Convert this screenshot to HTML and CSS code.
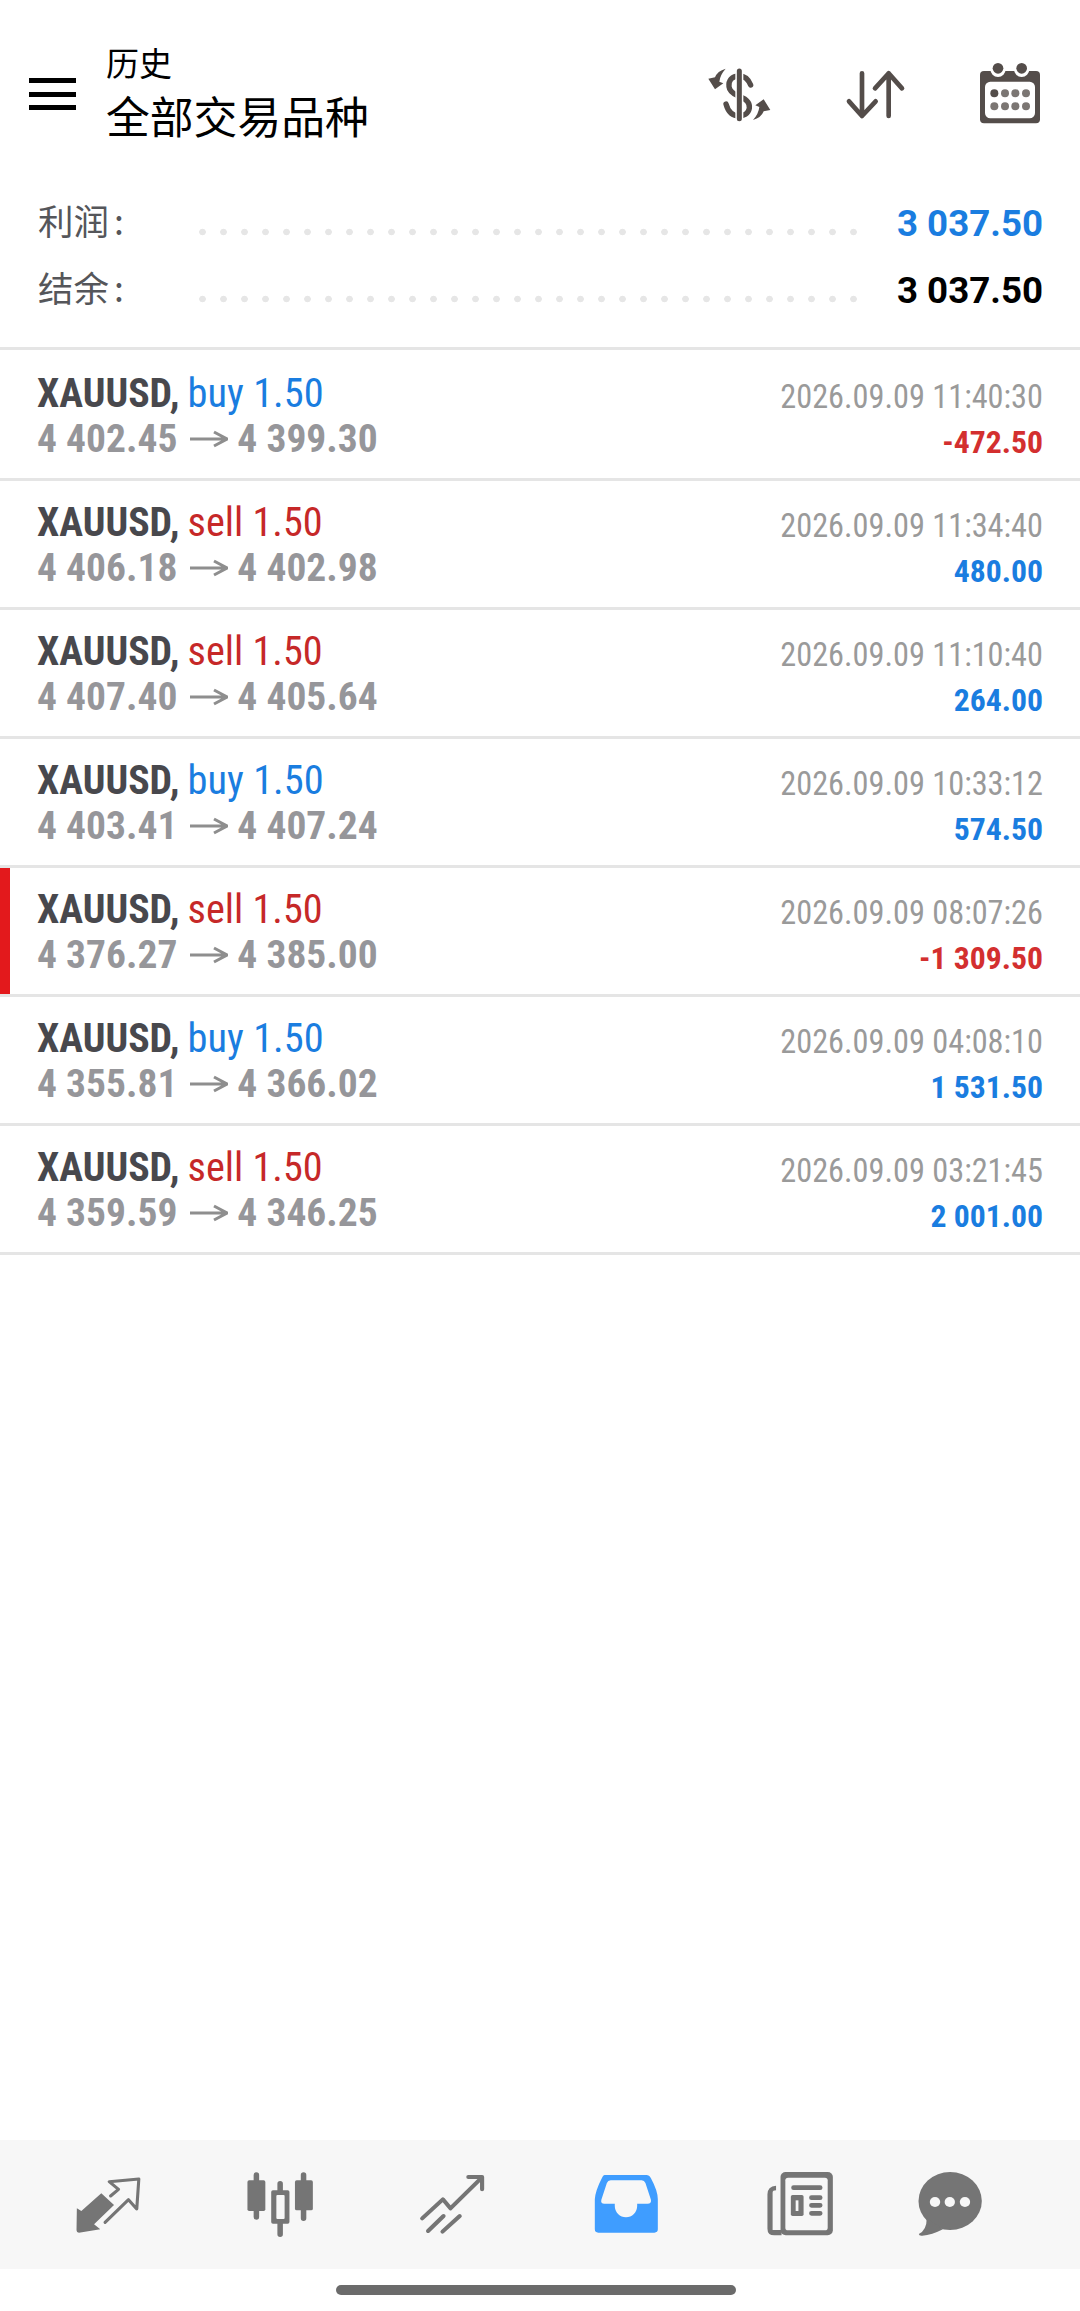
FILE: index.html
```html
<!DOCTYPE html>
<html lang="zh">
<head>
<meta charset="utf-8">
<title>历史</title>
<link rel="stylesheet" href="styles.css">
</head>
<body>
<div class="app">
  <header class="topbar">
    <div class="burger"><span></span><span></span><span></span></div>
    <div class="titles">
      <div class="title-small">历史</div>
      <div class="title-big">全部交易品种</div>
    </div>
    <div class="actions">
      <svg class="act" viewBox="141 60 198 198">
        <path class="dark-stroke s16" d="M272 135C262 110 245 108 238 108C215 108 205 122 207 140C209 160 230 165 240 170C262 178 270 190 268 205C265 222 250 228 238 228C220 228 205 218 198 192"/>
        <path class="cut" d="M238 88V240"/>
        <path class="dark-stroke s15" d="M238 93V236"/>
        <path class="dark" d="M197 86Q172 93 165 112L145 116L165 148L190 130L178 125Q180 105 197 86Z"/>
        <path class="dark" transform="rotate(180 238 163)" d="M197 86Q172 93 165 112L145 116L165 148L190 130L178 125Q180 105 197 86Z"/>
      </svg>
      <svg class="act" viewBox="546 60 198 198">
        <path class="dark-stroke s14" d="M606 100V228M567 184L606 228L647 184M686 228V100M645 145L686 100L726 145"/>
      </svg>
      <svg class="act" viewBox="951 60 198 198">
        <path class="dark" d="M972 93H1128Q1140 93 1140 105V238Q1140 250 1128 250H972Q960 250 960 238V105Q960 93 972 93Z"/>
        <rect class="white" x="975" y="125" width="150" height="110" rx="16"/>
        <circle class="white" cx="1014" cy="88" r="23"/>
        <circle class="white" cx="1085" cy="88" r="23"/>
        <circle class="dark" cx="1014" cy="85" r="16"/>
        <circle class="dark" cx="1085" cy="85" r="16"/>
        <circle class="dark" cx="1003" cy="160" r="12"/>
        <g class="mid">
          <circle cx="1035" cy="160" r="12"/><circle cx="1066" cy="160" r="12"/><circle cx="1098" cy="160" r="12"/>
          <circle cx="1003" cy="199" r="12"/><circle cx="1035" cy="199" r="12"/><circle cx="1066" cy="199" r="12"/><circle cx="1098" cy="199" r="12"/>
        </g>
      </svg>
    </div>
  </header>

  <section class="summary">
    <div class="sum-row"><span class="sum-label">利润 :</span><span class="dots"></span><span class="sum-val blue">3 037.50</span></div>
    <div class="sum-row"><span class="sum-label">结余 :</span><span class="dots"></span><span class="sum-val black">3 037.50</span></div>
  </section>

  <main class="list">
    <div class="row first">
      <div class="left"><div class="l1"><b>XAUUSD,</b> <span class="buy">buy 1.50</span></div><div class="l2">4 402.45<svg class="arrow" viewBox="0 0 38 20"><path d="M0 10H37M24 3L37 10L24 17"/></svg>4 399.30</div></div>
      <div class="right"><div class="time">2026.09.09 11:40:30</div><div class="pnl neg">-472.50</div></div>
    </div>
    <div class="row">
      <div class="left"><div class="l1"><b>XAUUSD,</b> <span class="sell">sell 1.50</span></div><div class="l2">4 406.18<svg class="arrow" viewBox="0 0 38 20"><path d="M0 10H37M24 3L37 10L24 17"/></svg>4 402.98</div></div>
      <div class="right"><div class="time">2026.09.09 11:34:40</div><div class="pnl pos">480.00</div></div>
    </div>
    <div class="row">
      <div class="left"><div class="l1"><b>XAUUSD,</b> <span class="sell">sell 1.50</span></div><div class="l2">4 407.40<svg class="arrow" viewBox="0 0 38 20"><path d="M0 10H37M24 3L37 10L24 17"/></svg>4 405.64</div></div>
      <div class="right"><div class="time">2026.09.09 11:10:40</div><div class="pnl pos">264.00</div></div>
    </div>
    <div class="row">
      <div class="left"><div class="l1"><b>XAUUSD,</b> <span class="buy">buy 1.50</span></div><div class="l2">4 403.41<svg class="arrow" viewBox="0 0 38 20"><path d="M0 10H37M24 3L37 10L24 17"/></svg>4 407.24</div></div>
      <div class="right"><div class="time">2026.09.09 10:33:12</div><div class="pnl pos">574.50</div></div>
    </div>
    <div class="row flagged">
      <div class="left"><div class="l1"><b>XAUUSD,</b> <span class="sell">sell 1.50</span></div><div class="l2">4 376.27<svg class="arrow" viewBox="0 0 38 20"><path d="M0 10H37M24 3L37 10L24 17"/></svg>4 385.00</div></div>
      <div class="right"><div class="time">2026.09.09 08:07:26</div><div class="pnl neg">-1 309.50</div></div>
    </div>
    <div class="row">
      <div class="left"><div class="l1"><b>XAUUSD,</b> <span class="buy">buy 1.50</span></div><div class="l2">4 355.81<svg class="arrow" viewBox="0 0 38 20"><path d="M0 10H37M24 3L37 10L24 17"/></svg>4 366.02</div></div>
      <div class="right"><div class="time">2026.09.09 04:08:10</div><div class="pnl pos">1 531.50</div></div>
    </div>
    <div class="row">
      <div class="left"><div class="l1"><b>XAUUSD,</b> <span class="sell">sell 1.50</span></div><div class="l2">4 359.59<svg class="arrow" viewBox="0 0 38 20"><path d="M0 10H37M24 3L37 10L24 17"/></svg>4 346.25</div></div>
      <div class="right"><div class="time">2026.09.09 03:21:45</div><div class="pnl pos">2 001.00</div></div>
    </div>
  </main>

  <nav class="tabbar">
    <svg class="tab" viewBox="205 117 210 210" preserveAspectRatio="none">
      <path class="grey" d="M222 232L235 240L293 187L330 222L272 280L290 295L228 305Q221 305 221 298Z"/>
      <path class="grey-stroke s9" d="M320 195L343 175L316 152L402 144L396 234L372 206L304 274"/>
    </svg>
    <svg class="tab" viewBox="708 117 210 210" preserveAspectRatio="none">
      <path class="grey-stroke s16" d="M744 132V258M813 158V310M881 132V262"/>
      <rect class="grey" x="718" y="148" width="52" height="92" rx="5"/>
      <rect class="grey" x="856" y="148" width="52" height="90" rx="5"/>
      <rect class="grey" x="787" y="178" width="53" height="100" rx="5"/>
      <rect class="bar-fill" x="802" y="192" width="24" height="72" rx="3"/>
    </svg>
    <svg class="tab" viewBox="1210 117 210 210" preserveAspectRatio="none">
      <path class="grey-stroke s12" d="M1228 262L1288 205L1310 232L1398 143M1362 138H1402V175M1245 300L1290 255M1287 302L1337 255"/>
    </svg>
    <svg class="tab" viewBox="148 117 210 210" preserveAspectRatio="none">
      <path class="blue-fill" d="M190 132H312Q320 132 325 142Q345 180 345 205V295Q345 305 335 305H172Q162 305 162 295V205Q163 180 183 140Q186 132 190 132Z"/>
      <path class="bar-fill" d="M208 148H298Q306 148 309 156L325 206Q327 218 315 218H285V225A32 33 0 0 1 220 225V218H190Q178 218 181 206L197 156Q200 148 208 148Z"/>
    </svg>
    <svg class="tab" viewBox="655 117 210 210" preserveAspectRatio="none">
      <rect class="grey" x="703" y="123" width="152" height="190" rx="15"/>
      <rect class="bar-fill" x="717" y="140" width="123" height="158" rx="8"/>
      <path class="grey" d="M690 164Q665 166 665 190V293Q665 313 685 313H706V297H680V185Q680 178 690 178Z"/>
      <path class="grey-stroke s14" d="M741 170H818M793 200H818M793 223H818M793 247H818"/>
      <rect class="grey" x="733" y="192" width="37" height="63" rx="5"/>
      <rect class="bar-fill" x="747" y="208" width="8" height="32"/>
    </svg>
    <svg class="tab" viewBox="1088 117 210 210" preserveAspectRatio="none">
      <ellipse class="grey" cx="1193" cy="210" rx="92" ry="87"/>
      <path class="grey" d="M1125 262Q1125 298 1102 309Q1102 315 1112 314Q1140 312 1172 295Z"/>
      <circle class="bar-fill" cx="1149" cy="213" r="15"/>
      <circle class="bar-fill" cx="1192" cy="213" r="15"/>
      <circle class="bar-fill" cx="1236" cy="213" r="15"/>
    </svg>
  </nav>
  <div class="gesture"><span></span></div>
</div>
</body>
</html>
```
FILE: styles.css
```css
* { box-sizing: border-box; }
html, body { margin: 0; padding: 0; background: #fff; }
.app {
  width: 1080px;
  height: 2311px;
  display: flex;
  flex-direction: column;
  font-family: Roboto, "Noto Sans CJK SC", sans-serif;
  overflow: hidden;
}

/* top bar */
.topbar { height: 178px; display: flex; align-items: flex-start; padding: 42px 0 0 29px; flex: none; }
.burger { width: 47px; margin-top: 36px; display: flex; flex-direction: column; gap: 8.5px; flex: none; }
.burger span { display: block; height: 5px; background: #000; }
.titles { margin-left: 30px; color: #000; font-family: "Noto Sans CJK SC", sans-serif; font-weight: 400; }
.title-small { font-size: 33px; line-height: 40px; }
.title-big { font-size: 43.8px; line-height: 54px; margin-top: 6px; }
.actions { margin-left: auto; display: flex; gap: 69px; padding-right: 37px; margin-top: 18px; }
.act { width: 66px; height: 66px; display: block; }
.dark { fill: #544d4a; }
.mid { fill: #7b7673; }
.white { fill: #fff; }
.cut { stroke: #fff; stroke-width: 24; fill: none; }
.dark-stroke { fill: none; stroke: #544d4a; stroke-linecap: round; stroke-linejoin: round; }
.s9 { stroke-width: 9; }
.s12 { stroke-width: 12; }
.s14 { stroke-width: 14; }
.s15 { stroke-width: 15; }
.s16 { stroke-width: 16; }

/* summary */
.summary { height: 172px; padding: 12px 37px 0 38px; flex: none; border-bottom: 3px solid #e5e5e5; }
.sum-row { display: flex; align-items: center; height: 67px; }
.sum-label { width: 154px; margin-bottom: 8px; font-family: "Noto Sans CJK SC", sans-serif; font-size: 35.5px; color: #55565a; flex: none; white-space: pre; word-spacing: -3px; }
.dots {
  flex: none;
  width: 672px;
  height: 8px;
  margin-top: 17px;
  background-image: radial-gradient(circle at center, #e6e6e6 3px, transparent 3.6px);
  background-size: 21px 8px;
  background-repeat: repeat-x;
}
.sum-val { margin-left: auto; font-size: 36.7px; font-weight: 700; }
.blue { color: #1a7de0; }
.black { color: #000; }

/* list */
.list { flex: 1; }
.row {
  height: 129px;
  display: flex;
  justify-content: space-between;
  padding: 19px 37px 0 37px;
  border-bottom: 3px solid #e5e5e5;
}
.row.first { height: 131px; padding-top: 21px; }
.row.flagged { box-shadow: inset 10px 0 0 #e3191c; }
.left, .right { font-stretch: 75%; white-space: nowrap; }
.l1 { font-size: 39.8px; line-height: 45px; }
.l1 b { color: #48484d; font-weight: 700; margin-right: -1px; }
.buy { color: #1a7de0; font-size: 40.4px; }
.sell { color: #c62828; font-size: 40.2px; }
.l2 { font-size: 39.5px; line-height: 45px; font-weight: 700; color: #96969a; }
.arrow { width: 38px; height: 20px; margin: 0 9px 0 13px; vertical-align: 3.5px; fill: none; stroke: #8e8e8e; stroke-width: 3; }
.right { text-align: right; }
.time { font-size: 32.3px; line-height: 44px; color: #9a9a9a; margin-top: 4px; }
.pnl { font-size: 31.7px; line-height: 44px; font-weight: 700; margin-top: 2px; }
.pos { color: #1a7de0; }
.neg { color: #d32f2f; }

/* tab bar */
.tabbar {
  height: 129px;
  flex: none;
  background: #f7f7f7;
  display: grid;
  grid-template-columns: 214px 132px 212px 136px 212px 88px;
  align-items: center;
  justify-items: center;
}
.tab { width: 72.3px; height: 70px; display: block; }
.grey { fill: #757575; }
.grey-stroke { fill: none; stroke: #757575; stroke-linecap: round; stroke-linejoin: round; }
.blue-fill { fill: #3f9dff; }
.bar-fill { fill: #f7f7f7; }
.gesture { height: 42px; flex: none; display: flex; justify-content: center; padding: 16px 9px 0 0; }
.gesture span { display: block; width: 400px; height: 10px; border-radius: 5px; background: #6b6b6b; }
```
